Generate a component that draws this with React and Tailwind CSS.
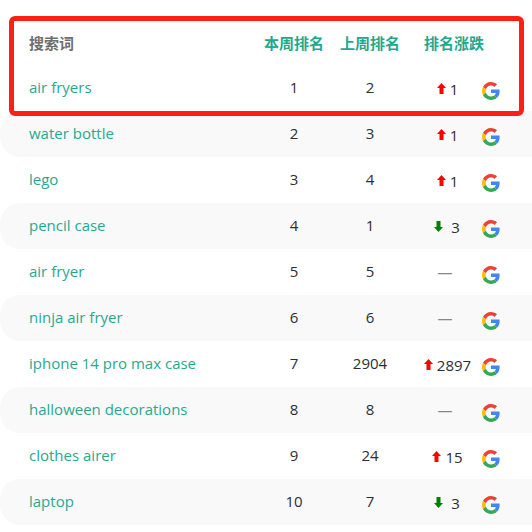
import React from "react";

const rows = [
  { word: "air fryers", now: 1, last: 2, dir: "up", diff: 1 },
  { word: "water bottle", now: 2, last: 3, dir: "up", diff: 1 },
  { word: "lego", now: 3, last: 4, dir: "up", diff: 1 },
  { word: "pencil case", now: 4, last: 1, dir: "down", diff: 3 },
  { word: "air fryer", now: 5, last: 5, dir: "same" },
  { word: "ninja air fryer", now: 6, last: 6, dir: "same" },
  { word: "iphone 14 pro max case", now: 7, last: 2904, dir: "up", diff: 2897 },
  { word: "halloween decorations", now: 8, last: 8, dir: "same" },
  { word: "clothes airer", now: 9, last: 24, dir: "up", diff: 15 },
  { word: "laptop", now: 10, last: 7, dir: "down", diff: 3 },
];

const GoogleIcon = () => (
  <svg className="w-[18px] h-[18px]" viewBox="0 0 48 48">
    <path fill="#EA4335" d="M24 9.5c3.54 0 6.71 1.22 9.21 3.6l6.85-6.85C35.9 2.38 30.47 0 24 0 14.62 0 6.51 5.38 2.56 13.22l7.98 6.19C12.43 13.72 17.74 9.5 24 9.5z" />
    <path fill="#4285F4" d="M46.98 24.55c0-1.57-.15-3.09-.38-4.55H24v9.02h12.94c-.58 2.96-2.26 5.48-4.78 7.18l7.73 6c4.51-4.18 7.09-10.36 7.09-17.65z" />
    <path fill="#FBBC05" d="M10.53 28.59c-.48-1.45-.76-2.99-.76-4.59s.27-3.14.76-4.59l-7.98-6.19C.92 16.46 0 20.12 0 24c0 3.88.92 7.54 2.56 10.78l7.97-6.19z" />
    <path fill="#34A853" d="M24 48c6.48 0 11.93-2.13 15.89-5.81l-7.73-6c-2.15 1.45-4.92 2.3-8.16 2.3-6.26 0-11.57-4.22-13.47-9.91l-7.98 6.19C6.51 42.62 14.62 48 24 48z" />
  </svg>
);

const UpArrow = () => (
  <svg className="w-[9px] h-[11px] shrink-0 mb-[2px]" viewBox="0 0 9 11">
    <path fill="#ff0000" d="M4.5 0 9 5H6.5v6h-4V5H0z" />
  </svg>
);

const DownArrow = () => (
  <svg className="w-[9px] h-[11px] shrink-0 mb-[2px]" viewBox="0 0 9 11">
    <path fill="#008000" d="M2.5 0h4v6H9l-4.5 5L0 6h2.5z" />
  </svg>
);

const Trend = ({ dir, diff }) => {
  if (dir === "same") {
    return <span className="text-[#888] mr-[4px]">—</span>;
  }
  if (dir === "up") {
    return (
      <span className="flex items-center gap-[4px] mt-[2px] ml-[1px]">
        <UpArrow />
        <span>{diff}</span>
      </span>
    );
  }
  return (
    <span className="flex items-center gap-[8px] mt-[2px]">
      <DownArrow />
      <span>{diff}</span>
    </span>
  );
};

const gridCols = "grid grid-cols-[235px_60px_16px_60px_14px_66px_2px_18px] items-center pl-[29px]";

export default function App() {
  return (
    <div className="relative w-[532px] h-[532px] bg-white overflow-hidden pt-[21px] text-[15px] text-[#2d2d33] font-['Open_Sans','Noto_Sans_CJK_SC',sans-serif]">
      <div className={`${gridCols} h-[44px] pt-[1px] font-bold text-[#1fa88e]`}>
        <span className="text-[#6e6e6e]">搜索词</span>
        <span className="text-center whitespace-nowrap">本周排名</span>
        <span />
        <span className="text-center whitespace-nowrap">上周排名</span>
        <span className="col-span-3 pl-[24px] whitespace-nowrap">排名涨跌</span>
      </div>
      {rows.map((row, i) => (
        <div
          key={row.word}
          className={`${gridCols} h-[46px] ${i % 2 === 1 ? "bg-[#f9f9f9] rounded-l-[20px]" : ""}`}
        >
          <span className="text-[#27a98f] whitespace-nowrap pb-[2px]">{row.word}</span>
          <span className="text-center pb-[2px]">{row.now}</span>
          <span />
          <span className="text-center pb-[2px]">{row.last}</span>
          <span />
          <span className="flex justify-center">
            <Trend dir={row.dir} diff={row.diff} />
          </span>
          <span />
          <span className="mt-[6px]">
            <GoogleIcon />
          </span>
        </div>
      ))}
      <div className="absolute left-[9px] top-[16px] w-[515px] h-[100px] border-[5px] border-[#ff2015] rounded-[6px]" />
    </div>
  );
}
